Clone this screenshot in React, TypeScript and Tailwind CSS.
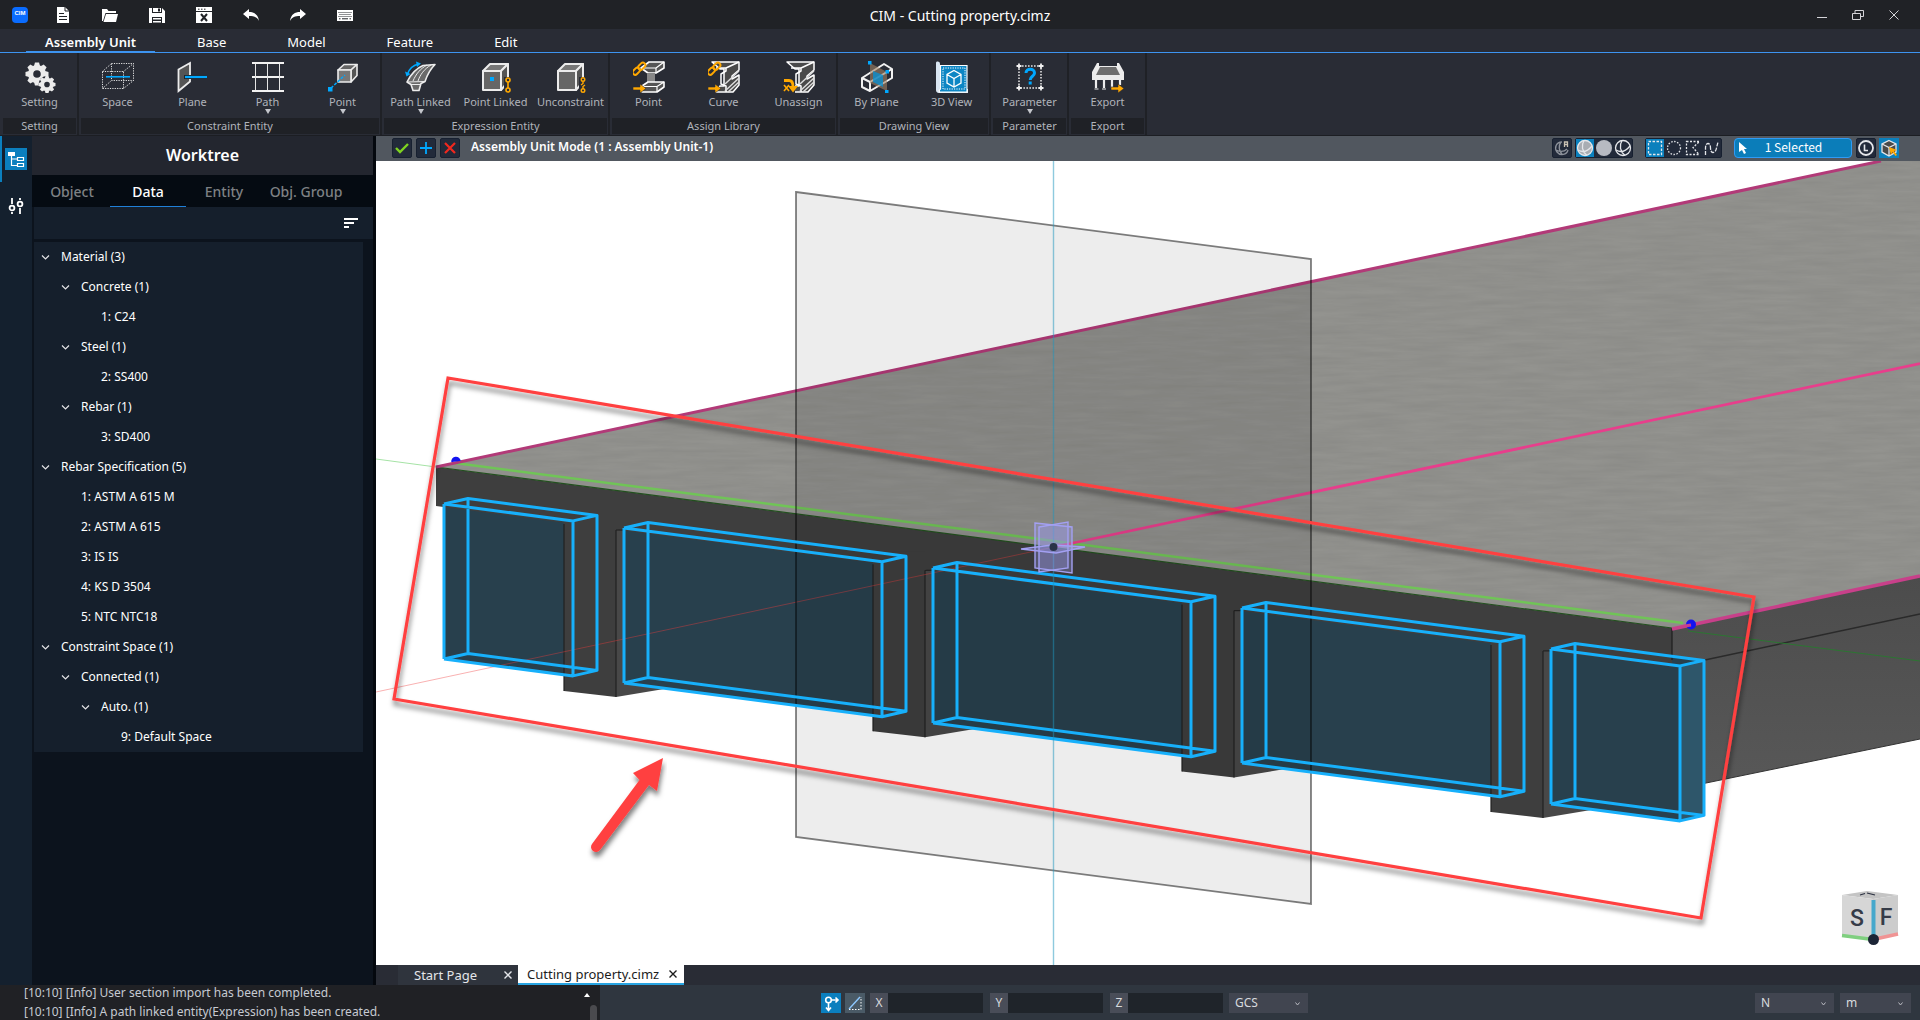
import type { ReactNode } from 'react';
import clsx from 'clsx';

const ORANGE = '#ffa800';
const SKY = '#00a8ff';

/* ---------- title bar icons ---------- */

function QuickIcon({ children }: { children: ReactNode }) {
  return (
    <svg viewBox="0 0 16 16" className="size-4" fill="#fff">
      {children}
    </svg>
  );
}

const quickActions: { name: string; icon: ReactNode }[] = [
  {
    name: 'New',
    icon: (
      <>
        <path d="M2 0h8l4 4v12H2z" />
        <path d="M10 0v4h4" fill="none" stroke="#202226" />
        <path d="M4 6.500h5M4 9.500h8M4 12.500h8" stroke="#202226" />
      </>
    ),
  },
  {
    name: 'Open',
    icon: (
      <>
        <path d="M0 2h5l1.500 2H14v2H3.500L1 14H0z" />
        <path d="M4 7h12l-2 8H1.500z" />
      </>
    ),
  },
  {
    name: 'Save',
    icon: (
      <>
        <path d="M0 1h3v5h10V1l3 3v12h-3v-6H3v6H0z" />
        <path d="M4 1h8v4H4z" />
        <path d="M9 1.500h2v3H9z" fill="#202226" />
        <path d="M4 11h8v1.500H4zM4 14h8v1.500H4z" />
      </>
    ),
  },
  {
    name: 'Close file',
    icon: (
      <>
        <path d="M0 0h16v16H0z" />
        <path d="M0 4.500h16M2 2.200h1.500M5 2.200h1.500M8 2.200h1.500" stroke="#202226" />
        <path d="M5 7l6 7M11 7l-6 7" stroke="#202226" strokeWidth="2" />
      </>
    ),
  },
  {
    name: 'Undo',
    icon: <path d="M0 7l6-5v3c5 0 9 2 10 9-2-4-5-5-10-5v3z" />,
  },
  {
    name: 'Redo',
    icon: <path d="M16 7l-6-5v3C5 5 1 7 0 14c2-4 5-5 10-5v3z" />,
  },
  {
    name: 'Shortcuts',
    icon: (
      <>
        <path d="M0 3h16v11H0z" />
        <path
          d="M1.500 5.500h13M2.500 7.500h12M1.500 9.500h13"
          stroke="#202226"
          strokeDasharray="1 1"
        />
        <path d="M2 11.800h1.500M5 11.800h6M12.500 11.800H14" stroke="#202226" />
      </>
    ),
  },
];

function TitleBar() {
  return (
    <header className="grid h-[29px] shrink-0 grid-cols-[1fr_auto_1fr] items-center bg-[#202226] px-3">
      <div className="flex items-center">
        <span className="flex size-4 justify-center rounded-sm bg-[#0a6cff] pt-[3px] font-['Liberation_Sans'] text-[6px] leading-[6px] font-bold text-white">
          CIM
        </span>
        <div className="ml-[27px] flex items-center gap-[31px]">
          {quickActions.map((action) => (
            <button key={action.name} aria-label={action.name}>
              <QuickIcon>{action.icon}</QuickIcon>
            </button>
          ))}
        </div>
      </div>
      <h1 className="pt-0.5 text-[14px] leading-5 text-white">
        CIM - Cutting property.cimz
      </h1>
      <div className="flex items-center justify-end gap-6 pr-2">
        <button aria-label="Minimize">
          <svg viewBox="0 0 12 12" className="size-3" stroke="#d4d4d8" fill="none">
            <path d="M1 8.500h10" />
          </svg>
        </button>
        <button aria-label="Restore">
          <svg viewBox="0 0 12 12" className="size-3" stroke="#d4d4d8" fill="none">
            <path d="M.5 4.500h8v6h-8zM3 4V1.500h8.500v6H9" />
          </svg>
        </button>
        <button aria-label="Close">
          <svg viewBox="0 0 12 12" className="size-3" stroke="#d4d4d8" fill="none">
            <path d="M1.500 1.500l9 9M10.500 1.500l-9 9" />
          </svg>
        </button>
      </div>
    </header>
  );
}

const menus = ['Assembly Unit', 'Base', 'Model', 'Feature', 'Edit'];

function MenuTabs() {
  return (
    <nav className="flex h-6 shrink-0 gap-[23px] border-b border-[#3d94f0] bg-[#292c35] pl-[26px]">
      {menus.map((menu, i) => (
        <button
          key={menu}
          className={clsx(
            'h-6 border-b-2 px-[19px] pt-1 text-[13px] leading-4 text-white',
            i === 0 ? 'border-[#3d94f0] font-semibold' : 'border-transparent',
          )}
        >
          {menu}
        </button>
      ))}
    </nav>
  );
}

/* ---------- ribbon icons ---------- */

function Gear({ x, y, r, teeth }: { x: number; y: number; r: number; teeth: number }) {
  const angles = Array.from({ length: teeth }, (_, i) => (360 / teeth) * i);
  return (
    <g transform={`translate(${x} ${y})`} fill="#ececec">
      <circle r={r * 0.56} fill="none" stroke="#ececec" strokeWidth={r * 0.46} />
      {angles.map((a) => (
        <path
          key={a}
          transform={`rotate(${a})`}
          d={`M${-r * 0.26} ${-r * 0.7}L${-r * 0.18} ${-r}H${r * 0.18}L${r * 0.26} ${-r * 0.7}z`}
        />
      ))}
    </g>
  );
}

function SolidCube() {
  return (
    <g stroke="#ececec" strokeWidth="2" strokeLinejoin="round">
      <path d="M3 10l7-7h18l-7 7z" fill="#777" />
      <path d="M21 10l7-7v18l-7 8z" fill="#555" />
      <path d="M3 10h18v19H3z" fill="#666" />
    </g>
  );
}

function Link() {
  return (
    <g fill="none" stroke={ORANGE} strokeWidth="2">
      <rect x="-5" y="-2.500" width="8" height="5" rx="2.500" transform="translate(4 9.500) rotate(-45)" />
      <rect x="-5" y="-2.500" width="8" height="5" rx="2.500" transform="translate(9.500 4.500) rotate(-45)" />
    </g>
  );
}

function OrangeArrow({ x, y }: { x: number; y: number }) {
  return (
    <path
      d={`M${x} ${y - 1.5}h7v-3l6 4.500-6 4.500v-3h-7z`}
      fill={ORANGE}
      stroke="#292c35"
      strokeWidth="0.6"
    />
  );
}

function CutBeam() {
  return (
    <g stroke="#fff" strokeWidth="1.500" strokeLinejoin="round">
      <path d="M4 1h27v8l-7 6v3l7-4v10l-6 7H8l4-6h4V8h-4z" fill="#4a4a4a" />
      <path d="M8 7h10l13-6M18 7v3l-5 3v10l5 2v6" fill="none" />
      <path d="M17 30l14-13M17 23L31 10M20 31l11-10" stroke="#ddd" />
    </g>
  );
}

const icons: Record<string, ReactNode> = {
  setting: (
    <>
      <Gear x={13} y={13} r={11.5} teeth={8} />
      <circle cx="23" cy="23.500" r="8.500" fill="#292c35" />
      <Gear x={23} y={23.5} r={8.5} teeth={8} />
    </>
  ),
  space: (
    <>
      <path
        d="M.5 10.500h21v17H.5zM9.500 2.500h22v17h-22zM.5 10.500l9-8M21.500 10.500l10-8M.5 27.500l9-8M21.500 27.500l10-8"
        fill="none"
        stroke="#e4e4e4"
        strokeDasharray="1.200 1.200"
      />
      <path d="M4 15.800h24" stroke={SKY} strokeWidth="1.600" />
    </>
  ),
  plane: (
    <>
      <path d="M1.500 8.500L13 2v18.500L1.500 30z" fill="#555" stroke="#ececec" strokeWidth="1.800" />
      <path d="M7 16h23" stroke="#20242b" strokeWidth="4" />
      <path d="M8 16h22" stroke={SKY} strokeWidth="2.200" />
    </>
  ),
  path: (
    <>
      <path d="M0 2h32M0 16h32M0 30h32" stroke="#f2f2f2" strokeWidth="2" />
      <path d="M3.500 3v26M15.500 3v26M27.500 3v26" stroke="#e4e4e4" />
    </>
  ),
  point: (
    <>
      <g stroke="#ececec" strokeWidth="1.600" strokeLinejoin="round">
        <path d="M11 9l6-5.500h13L24 9z" fill="#666" />
        <path d="M24 9l6-5.500v11L24 21z" fill="#555" />
        <path d="M11 9h13v12H11z" fill="#777" />
      </g>
      <path d="M4 27l14-13" stroke={SKY} strokeWidth="1.500" strokeDasharray="3 1.500" />
      <path d="M1 26h4.500v4.500H1z" fill={SKY} />
    </>
  ),
  pathLinked: (
    <>
      <path
        d="M2 21C6 13 12 7 18 4.500L30 3.500c-5 5-8 11-10 17l-4 2-2 7H8l-2-6z"
        fill="#6a6a6a"
        stroke="#ececec"
        strokeWidth="1.600"
        strokeLinejoin="round"
      />
      <path d="M2 21l18-.5M8 20c3-7 7-12 14-16M13 20c2-6 6-12 13-16M6 23.500h10" fill="none" stroke="#ececec" />
      <path d="M2 14C4 8 8 4 14 3" fill="none" stroke={SKY} strokeWidth="1.500" />
      <path d="M0 10.500l1.500 5 4-2.500zM11 .5l5 2L12 6z" fill={SKY} />
    </>
  ),
  pointLinked: (
    <>
      <SolidCube />
      <path d="M10 16h4v4h-4z" fill={SKY} />
      <path d="M24 16h8v16h-8z" fill="#292c35" />
      <g fill="none" stroke={ORANGE} strokeWidth="1.600">
        <circle cx="28" cy="19" r="2" />
        <circle cx="28" cy="29" r="2" />
        <path d="M28 21v6" />
      </g>
    </>
  ),
  unconstraint: (
    <>
      <SolidCube />
      <path d="M24 16h8v16h-8z" fill="#292c35" />
      <g fill="none" stroke={ORANGE} strokeWidth="1.400">
        <circle cx="28" cy="18.500" r="1.800" />
        <circle cx="28" cy="29.500" r="1.800" />
        <path d="M28 20.500v2l-2 1.500M28 27.500v-2l2-1.500" />
      </g>
    </>
  ),
  assignPoint: (
    <>
      <g stroke="#fff" strokeWidth="1.600" strokeLinejoin="round">
        <path d="M8 7l8-6h15v6l-8 5h-8z" fill="#555" />
        <path d="M14 12h8v10h-8z" fill="#888" stroke="none" />
        <path d="M9 25l6-4h16v5l-7 5H9z" fill="#555" />
        <path d="M9 25.500h15l7-4.500M24 25.500V31M10 7h13l8-6M23 7v5" fill="none" strokeWidth="1.200" />
      </g>
      <Link />
      <OrangeArrow x={0} y={27.5} />
    </>
  ),
  assignCurve: (
    <>
      <CutBeam />
      <Link />
      <OrangeArrow x={0} y={27.5} />
    </>
  ),
  unassign: (
    <>
      <CutBeam />
      <path d="M0 17h12v15H0z" fill="#292c35" />
      <path d="M1 24l5 6M6 24l-5 6" stroke={ORANGE} strokeWidth="1.600" />
      <path d="M1 19.500h5c3 0 4 2 4 6" fill="none" stroke={ORANGE} strokeWidth="2.800" />
      <path d="M5 25h10l-5 6.500z" fill={ORANGE} />
    </>
  ),
  byPlane: (
    <>
      <g fill="none" stroke="#f2f2f2" strokeWidth="2" strokeLinejoin="round">
        <path d="M1 17l22-14 8 5v9L9 30l-8-4z" />
        <path d="M1 17l8 4L31 8M9 21v9" />
      </g>
      <path d="M9 2l17 9v19L9 22z" fill="#a08468" fillOpacity=".6" />
      <path d="M12 10l10 4v12l-10-5z" fill="#0a8fcf" fillOpacity=".8" />
      <path d="M7 0h3.500v3.500H7zM24.500 9H28v3.500h-3.500zM24 29h3.500v3H24z" fill={SKY} />
    </>
  ),
  view3d: (
    <>
      <path d="M0 2c0-2 4-2 4 1v25h28v4H4c-4 0-4-2-4-4z" fill="#d9e6f2" />
      <path d="M4.500 4.500H31v26.500H3.500c-1-2 1-3 1-3z" fill="#0d86c4" stroke="#fff" strokeWidth="1.200" />
      <path d="M7 7h22v21H7z" fill="none" stroke="#fff" strokeDasharray="1.200 1.200" />
      <path d="M18 9.500l7 4v8.500l-7 4-7-4v-8.500zM11 13.500l7 4 7-4M18 17.500V26" fill="none" stroke="#fff" strokeWidth="1.300" />
    </>
  ),
  parameter: (
    <>
      <path d="M5 5h22v22H5z" fill="none" stroke="#e4e4e4" strokeWidth="1.600" strokeDasharray="1.600 1.400" />
      <path
        d="M2.500 5h5M5 2.500v5M24.500 5h5M27 2.500v5M2.500 27h5M5 24.500v5M24.500 27h5M27 24.500v5"
        stroke="#f2f2f2"
        strokeWidth="1.800"
      />
      <path d="M12 12c0-5 8.500-5 8.500 0 0 3.500-4.300 3-4.300 7" fill="none" stroke={SKY} strokeWidth="3" />
      <path d="M14.700 20.500h3v3h-3z" fill={SKY} />
    </>
  ),
  export: (
    <>
      <path d="M0 11L5 2h2v3h18V2h2l5 9v8H0z" fill="#ececec" />
      <path d="M8 6h16l4 8H4z" fill="#6e6e6e" />
      <path d="M4 18v9M12 18v9M20 18v9M28 18v6" stroke="#ececec" strokeWidth="2.200" />
      <path d="M2.500 28h4M10 28h4" stroke="#ececec" />
      <OrangeArrow x={19} y={27.5} />
    </>
  ),
};

type Tool = { icon: string; label: string; menu?: boolean };

const ribbon: { title: string; tools: Tool[] }[] = [
  { title: 'Setting', tools: [{ icon: 'setting', label: 'Setting' }] },
  {
    title: 'Constraint Entity',
    tools: [
      { icon: 'space', label: 'Space' },
      { icon: 'plane', label: 'Plane' },
      { icon: 'path', label: 'Path', menu: true },
      { icon: 'point', label: 'Point', menu: true },
    ],
  },
  {
    title: 'Expression Entity',
    tools: [
      { icon: 'pathLinked', label: 'Path Linked', menu: true },
      { icon: 'pointLinked', label: 'Point Linked' },
      { icon: 'unconstraint', label: 'Unconstraint' },
    ],
  },
  {
    title: 'Assign Library',
    tools: [
      { icon: 'assignPoint', label: 'Point' },
      { icon: 'assignCurve', label: 'Curve' },
      { icon: 'unassign', label: 'Unassign' },
    ],
  },
  {
    title: 'Drawing View',
    tools: [
      { icon: 'byPlane', label: 'By Plane' },
      { icon: 'view3d', label: '3D View' },
    ],
  },
  { title: 'Parameter', tools: [{ icon: 'parameter', label: 'Parameter', menu: true }] },
  { title: 'Export', tools: [{ icon: 'export', label: 'Export' }] },
];

function Ribbon() {
  return (
    <div className="flex h-[83px] shrink-0 border-b border-[#1c1e23] bg-[#292c35] pl-px">
      {ribbon.map((group) => (
        <section key={group.title} className="flex flex-col border-r-2 border-[#1f2126] pl-px">
          <div className="flex flex-1">
            {group.tools.map((tool) => (
              <button key={tool.label} className="flex w-[75px] flex-col items-center pt-2">
                <svg viewBox="0 0 32 32" className="size-8">
                  {icons[tool.icon]}
                </svg>
                <span className="mt-px text-[11px] leading-[15px] whitespace-nowrap text-[#b0b3ba]">
                  {tool.label}
                </span>
                {tool.menu && (
                  <svg viewBox="0 0 6 5" className="h-[5px] w-1.5" fill="#c4c6cc">
                    <path d="M0 0h6L3 5z" />
                  </svg>
                )}
              </button>
            ))}
          </div>
          <h2 className="mx-px mb-px bg-[#1f2126] text-center text-[11px] leading-4 text-[#b0b3ba]">
            {group.title}
          </h2>
        </section>
      ))}
    </div>
  );
}

/* ---------- worktree ---------- */

type Node = { label: string; children?: Node[] };

const tree: Node[] = [
  {
    label: 'Material (3)',
    children: [
      { label: 'Concrete (1)', children: [{ label: '1: C24' }] },
      { label: 'Steel (1)', children: [{ label: '2: SS400' }] },
      { label: 'Rebar (1)', children: [{ label: '3: SD400' }] },
    ],
  },
  {
    label: 'Rebar Specification (5)',
    children: [
      { label: '1: ASTM A 615 M' },
      { label: '2: ASTM A 615' },
      { label: '3: IS IS' },
      { label: '4: KS D 3504' },
      { label: '5: NTC NTC18' },
    ],
  },
  {
    label: 'Constraint Space (1)',
    children: [
      {
        label: 'Connected (1)',
        children: [{ label: 'Auto. (1)', children: [{ label: '9: Default Space' }] }],
      },
    ],
  },
];

function TreeNode({ node }: { node: Node }) {
  return (
    <li>
      <button className="flex h-[30px] items-center gap-[11px] pl-[7px] text-[12px] text-white">
        <svg viewBox="0 0 9 9" className="size-[9px]" fill="none" stroke="#e4e4e7" strokeWidth="1.200">
          {node.children && <path d="M1 2.500l3.500 3.500L8 2.500" />}
        </svg>
        {node.label}
      </button>
      {node.children && (
        <ul className="pl-5">
          {node.children.map((child) => (
            <TreeNode key={child.label} node={child} />
          ))}
        </ul>
      )}
    </li>
  );
}

const treeTabs = ['Object', 'Data', 'Entity', 'Obj. Group'];

function Sidebar() {
  return (
    <div className="flex w-94 shrink-0 border-r-3 border-[#04080e] bg-[#0c131d]">
      <div className="w-8 shrink-0 bg-[#14202e]">
        <div className="border-l-2 border-[#0b7fbe] py-3 pl-[3px]">
          <button aria-label="Worktree" className="block size-[22px] bg-[#0b7fbe]">
            <svg viewBox="0 0 22 22" className="size-[22px]">
              <path d="M3 4h7v4H3z" fill="#fff" />
              <path d="M6.500 8v9.500H12M6.500 11h5.500M12.500 9.500h6v3h-6zM12.500 15.500h6v3h-6z" fill="none" stroke="#fff" strokeWidth="1.200" />
            </svg>
          </button>
        </div>
        <button aria-label="Options" className="mt-[15px] ml-2 block">
          <svg viewBox="0 0 16 18" className="h-[18px] w-4" fill="none" stroke="#fff" strokeWidth="1.800">
            <circle cx="4" cy="11" r="2.400" />
            <circle cx="12" cy="7" r="2.400" />
            <path d="M4 1v6M4 15v2M12 1v2M12 11v6" />
          </svg>
        </button>
      </div>
      <aside className="flex min-w-0 flex-1 flex-col">
        <h2 className="bg-[#23262f] text-center text-[16px] leading-[39px] font-semibold text-white">
          Worktree
        </h2>
        <div className="flex h-8 bg-[#050b12] pl-0.5">
          {treeTabs.map((tab) => (
            <button
              key={tab}
              className={clsx(
                'border-b pt-0.5 text-[14px] font-medium',
                tab === 'Obj. Group' ? 'w-22' : 'w-19',
                tab === 'Data' ? 'border-[#2080d8] text-white' : 'border-transparent text-[#7e8184]',
              )}
            >
              {tab}
            </button>
          ))}
        </div>
        <div className="ml-0.5 flex h-8 items-center justify-end bg-[#151f2c] pr-[15px]">
          <button aria-label="Sort">
            <svg viewBox="0 0 14 10" className="h-2.5 w-3.5" stroke="#fff" strokeWidth="2">
              <path d="M0 1h14M0 5h10M0 9h5" />
            </svg>
          </button>
        </div>
        <ul className="mt-[3px] mr-2.5 ml-0.5 bg-[#151f2c]">
          {tree.map((node) => (
            <TreeNode key={node.label} node={node} />
          ))}
        </ul>
      </aside>
    </div>
  );
}

/* ---------- mode bar ---------- */

function ViewIcon({ children }: { children: ReactNode }) {
  return (
    <svg viewBox="0 0 18 18" className="size-[18px]" fill="none" stroke="#e4e6ea" strokeWidth="1.300">
      {children}
    </svg>
  );
}

const modeButton = 'flex size-5 items-center justify-center rounded-xs border border-[#172030] bg-[#222a3a]';
const modeGroup = 'flex gap-px rounded-xs border border-[#172030] bg-[#222a3a]';

const shadeModes = [
  {
    name: 'Shaded with edges',
    icon: (
      <>
        <circle cx="9" cy="9" r="7.500" fill="#a9adb3" />
        <path d="M2 11c5 3 10 1 14-4M8 1.500c-3 5-2 11 3 15" />
      </>
    ),
  },
  { name: 'Shaded', icon: <circle cx="9" cy="9" r="8" fill="#b7bac2" stroke="none" /> },
  {
    name: 'Wireframe',
    icon: (
      <>
        <circle cx="9" cy="9" r="7.500" />
        <path d="M2 11c5 3 10 1 14-4M8 1.500c-3 5-2 11 3 15" />
      </>
    ),
  },
];

const selectModes = [
  { name: 'Select by window', icon: <path d="M2.500 2.500h13v13h-13z" strokeDasharray="2.500 1.500" /> },
  { name: 'Select by circle', icon: <circle cx="9" cy="9" r="6.500" strokeDasharray="1.500 1.500" /> },
  {
    name: 'Select by polygon',
    icon: <path d="M2.500 2.500h13L9 8.500l6 7h-12.500z" strokeDasharray="2 1.500" />,
  },
  { name: 'Select by line', icon: <path d="M2.500 16V9c0-6 5-6 5 0s5 6 6 0l1.500-6" strokeDasharray="4 1.200" /> },
];

function ModeBar() {
  return (
    <div className="flex h-[25px] shrink-0 items-start bg-[#51575f] pt-0.5 pr-[21px] pl-4">
      <div className="flex gap-1">
        <button aria-label="Apply" className={modeButton}>
          <svg viewBox="0 0 16 16" className="size-4" fill="none" stroke="#7ed321" strokeWidth="2.400">
            <path d="M2 8l4 4 8-8" />
          </svg>
        </button>
        <button aria-label="Add" className={modeButton}>
          <svg viewBox="0 0 16 16" className="size-4" stroke="#00a8ff" strokeWidth="1.800">
            <path d="M8 2v12M2 8h12" />
          </svg>
        </button>
        <button aria-label="Cancel" className={modeButton}>
          <svg viewBox="0 0 16 16" className="size-4" stroke="#f0281e" strokeWidth="2.200">
            <path d="M3 3l10 10M13 3L3 13" />
          </svg>
        </button>
      </div>
      <h2 className="ml-[11px] text-[12px] leading-[18px] font-semibold text-white">
        Assembly Unit Mode (1 : Assembly Unit-1)
      </h2>
      <div className="ml-auto flex items-center">
        <button aria-label="Auto shading" className={modeButton}>
          <ViewIcon>
            <path d="M9 3C3 3 1 9 4 13s10 3 11-2M3 11c4 2 8 2 11-1M8 3c-3 4-2 9 1 12" stroke="#8d929b" />
            <path d="M11.500 8V3h3v5M11.500 5.500h3" stroke="#c9c2b4" />
          </ViewIcon>
        </button>
        <div className={clsx(modeGroup, 'ml-[3px]')}>
          {shadeModes.map((mode, i) => (
            <button key={mode.name} aria-label={mode.name} className={clsx(i === 0 && 'bg-[#0b80bd]')}>
              <ViewIcon>{mode.icon}</ViewIcon>
            </button>
          ))}
        </div>
        <div className={clsx(modeGroup, 'ml-3')}>
          {selectModes.map((mode, i) => (
            <button key={mode.name} aria-label={mode.name} className={clsx(i === 0 && 'bg-[#0b80bd]')}>
              <ViewIcon>{mode.icon}</ViewIcon>
            </button>
          ))}
        </div>
        <button className="ml-3 flex h-5 w-[118px] items-center rounded-sm border border-[#2f9bf5] bg-[#0b7db9] pl-1 text-white">
          <svg viewBox="0 0 9 12" className="h-3 w-[9px]" fill="#fff">
            <path d="M0 0l8 7H5l2 4-2 1-2-4-3 2z" />
          </svg>
          <span className="flex-1 pr-3 pb-0.5 font-['Noto_Sans_CJK_KR','Noto_Sans',sans-serif] text-[12px] leading-4">
            1 Selected
          </span>
        </button>
        <button aria-label="Local axis" className={clsx(modeButton, 'ml-1')}>
          <ViewIcon>
            <circle cx="9" cy="9" r="7" strokeWidth="1.800" />
            <path d="M7.500 5.500v6H11" strokeWidth="1.600" />
          </ViewIcon>
        </button>
        <button aria-label="Pick solid" className="ml-[3px] flex size-5 items-center justify-center bg-[#0b80bd]">
          <ViewIcon>
            <path d="M9 1.500L16 5v8l-7 4-7-4V5z" fill="#4a4a4a" />
            <path d="M2 5l7 3.500L16 5M9 8.500V17" />
            <path d="M9 8l8 3-3 1 3 4-1.500 1-3-4-1.500 3z" fill={ORANGE} stroke="none" />
          </ViewIcon>
        </button>
      </div>
    </div>
  );
}

/* ---------- 3D scene ---------- */

type Box = { x: number; y: number; w: number };

// front top-left corner of every void box and the width of its front face
const boxes: Box[] = [
  { x: 444, y: 504, w: 129 },
  { x: 624, y: 528, w: 258 },
  { x: 933, y: 568, w: 258 },
  { x: 1242, y: 608, w: 258 },
  { x: 1551, y: 649, w: 129 },
];

const SLOPE = 0.131;
const BOX_H = 155;

function corners({ x, y, w }: Box) {
  const drop = w * SLOPE;
  return {
    fl: [x, y],
    fr: [x + w, y + drop],
    bl: [x + 24, y - 5.5],
    br: [x + 24 + w, y + drop - 5.5],
  };
}

const down = ([x, y]: number[]) => [x, y + BOX_H];
const line = (...pts: number[][]) => 'M' + pts.map((p) => p.join(' ')).join('L');

function BoxFill({ box }: { box: Box }) {
  const { fl, fr, bl, br } = corners(box);
  return <path d={line(fl, bl, br, down(br), down(fr), down(fl)) + 'z'} fill="#28404d" />;
}

function BoxEdges({ box }: { box: Box }) {
  const { fl, fr, bl, br } = corners(box);
  return (
    <path
      d={[
        line(fl, fr, br, bl, fl),
        line(down(fl), down(fr), down(br), down(bl), down(fl)),
        line(fl, down(fl)),
        line(fr, down(fr)),
        line(bl, down(bl)),
        line(br, down(br)),
      ].join('')}
      fill="none"
      stroke="#17b0fb"
      strokeWidth="3"
      strokeLinejoin="round"
    />
  );
}

const girders = [0, 1, 2, 3].map((i) => ({ x: 564 + 309 * i, y: 691 + 40.3 * i }));

function Scene() {
  return (
    <svg
      viewBox="376 161 1544 804"
      preserveAspectRatio="xMidYMid slice"
      className="min-h-0 w-full flex-1 bg-white"
    >
      <defs>
        <linearGradient id="side" x1="0" y1="0" x2="0" y2="1">
          <stop offset="0" stopColor="#4c4c4c" />
          <stop offset="1" stopColor="#585858" />
        </linearGradient>
        <filter id="concrete" x="0" y="0" width="100%" height="100%">
          <feTurbulence type="fractalNoise" baseFrequency="0.02 0.2" numOctaves="3" result="n" />
          <feColorMatrix in="n" values="0 0 0 0 0  0 0 0 0 0  0 0 0 0 0  .16 0 0 0 -.04" result="g" />
          <feComposite in="g" in2="SourceGraphic" operator="in" result="t" />
          <feMerge>
            <feMergeNode in="SourceGraphic" />
            <feMergeNode in="t" />
          </feMerge>
        </filter>
        <filter id="shadow" x="-5%" y="-5%" width="110%" height="115%">
          <feDropShadow dx="1" dy="5" stdDeviation="2.500" floodOpacity=".5" />
        </filter>
      </defs>

      {/* deck top and right side */}
      <path d="M436 467L1881 161H1920V576L1672 628z" fill="#93938f" filter="url(#concrete)" />
      <path d="M1672 628L1920 576V739L1672 790z" fill="url(#side)" />
      <path d="M1672 667L1920 614" stroke="#2a2a2a" strokeWidth="1.500" />
      <path d="M1672 790L1920 739" stroke="#333" />

      {/* right faces of the girders */}
      {girders.map(({ x, y }) => (
        <path key={x} d={`M${x + 52} ${y - 162}l60 -10v168L${x + 52} ${y + 6}z`} fill="#484848" />
      ))}

      {boxes.map((box) => (
        <BoxFill key={box.x} box={box} />
      ))}
      <path d="M1680 666L1704 660V815L1680 821z" fill="#2e566a" />

      {/* slab and girder front */}
      <path d="M436 467L1672 628V667L436 506z" fill="#3e3e3e" />
      {girders.map(({ x, y }) => (
        <g key={x}>
          <path d={`M${x} ${y - 180}h52V${y + 6}L${x} ${y}z`} fill="#3e3e3e" />
          <path d={`M${x + 52} ${y - 161}V${y + 6}M${x} ${y}V${y - 167}`} stroke="#222" strokeWidth="1.200" fill="none" />
          <path d={`M${x + 52} ${y - 161}h7`} stroke="#222" strokeWidth="1.200" />
        </g>
      ))}
      <path d="M1672 628V660" stroke="#1e1e1e" strokeWidth="1.200" />

      {/* world axes */}
      <path d="M376 459L436 467" stroke="#a6e3a6" />
      <path d="M1688 631L1920 661" stroke="#2c7632" />
      <path d="M376 692L1054 547" stroke="#f03c3c" strokeOpacity=".4" />

      <path d="M436 467L1672 628" stroke="#23501f" strokeWidth="1.200" />
      <path d="M455 463L1683 623" stroke="#70c457" strokeWidth="2.500" />
      <path d="M436 467L1881 161" stroke="#b23a78" strokeWidth="3" />
      <path d="M1672 629L1920 576" stroke="#c8408a" strokeWidth="3.500" />
      <path d="M1054 547L1920 363.500" stroke="#e83e8c" strokeWidth="2.800" />

      {/* section plane */}
      <path d="M796 192L1311 259V904L796 837z" fill="#000" fillOpacity=".07" stroke="#000" strokeOpacity=".5" strokeWidth="1.800" />

      {boxes.map((box) => (
        <BoxEdges key={box.x} box={box} />
      ))}
      <path d="M1053.500 161V965" stroke="#1e96be" strokeOpacity=".5" strokeWidth="1.400" />

      {/* origin */}
      <g fill="#9a9af0" fillOpacity=".3" stroke="#a3a0f2" strokeWidth="1.400">
        <path d="M1035 523L1072 527V573L1035 568z" />
        <path d="M1039 527L1068 522V568L1039 572z" />
        <path d="M1021 549L1052 545L1085 547L1056 553z" />
      </g>
      <circle cx="1053.500" cy="547" r="4" fill="#2a3448" />
      <path d="M452 462a4 4 0 0 1 8-1" fill="#1414f0" stroke="#1414f0" strokeWidth="1.500" />
      <circle cx="1691" cy="624.500" r="4" fill="#1414f0" stroke="#1414f0" strokeWidth="2" />
      <path d="M1685 626l6-1" stroke="#c8408a" strokeWidth="3" />

      {/* annotation */}
      <g filter="url(#shadow)">
        <path d="M448 378L1754 597L1701 918L394 699z" fill="none" stroke="#ff4141" strokeWidth="3.200" />
      </g>
      <path
        d="M663 758L633 773L639.500 780L592 844A5 5 0 0 0 600 850L649 785L657 791z"
        fill="#ff4141"
        filter="url(#shadow)"
      />

      {/* view cube */}
      <g>
        <path d="M1842 895L1867 891L1898 895L1873 899z" fill="#c4c4c4" />
        <path d="M1842 895L1873 899V940L1842 936z" fill="#d6d6d6" />
        <path d="M1873 899L1898 895V934L1873 940z" fill="#cccccc" />
        <path d="M1860 895l5-1.500M1867 893l8 2" stroke="#2a3040" strokeWidth="1.200" />
        <path d="M1842 935.500L1873 939.500" stroke="#7fcf7f" strokeWidth="3.500" />
        <path d="M1873 939.500L1898 934" stroke="#f09494" strokeWidth="3.500" />
        <path d="M1873.500 900V938" stroke="#46a8cc" strokeWidth="4" />
        <circle cx="1873.500" cy="939.500" r="5.500" fill="#1c2436" />
        <g className="font-['Roboto'] text-[23px] font-medium" fill="#363c48" textAnchor="middle">
          <text x="1857" y="926">S</text>
          <text x="1886" y="925">F</text>
        </g>
      </g>
    </svg>
  );
}

function CloseIcon() {
  return (
    <svg viewBox="0 0 8 8" className="size-2" stroke="currentColor" strokeWidth="1.400">
      <path d="M.5 .5l7 7M7.500 .5l-7 7" />
    </svg>
  );
}

function DocumentTabs() {
  return (
    <div className="flex h-5 shrink-0 bg-[#292c35] pl-[22px] text-[13px] leading-[18px]">
      <div className="flex w-30 items-center justify-between bg-[#2f343d] pr-1.5 pl-4 text-[#e4e6ea]">
        <button>Start Page</button>
        <button aria-label="Close Start Page">
          <CloseIcon />
        </button>
      </div>
      <div className="flex items-center gap-2.5 border-b-2 border-[#28a4e2] bg-white pr-[7px] pl-[9px] text-[#1c1c1c]">
        <button>Cutting property.cimz</button>
        <button aria-label="Close Cutting property.cimz">
          <CloseIcon />
        </button>
      </div>
    </div>
  );
}

/* ---------- bottom bar ---------- */

function Coordinate({ axis }: { axis: string }) {
  return (
    <label className="flex h-5 items-center bg-[#494d58] text-[12px] text-[#d8dade]">
      <span className="w-[18px] text-center">{axis}</span>
      <input type="text" className="h-5 w-[95px] bg-[#1f242a] px-1 outline-none" />
    </label>
  );
}

function Unit({ name, value, className }: { name: string; value: string; className: string }) {
  return (
    <div className={clsx('relative h-5', className)}>
      <select
        aria-label={name}
        defaultValue={value}
        className="block h-5 w-full appearance-none bg-[#414550] pl-1.5 text-[12px] leading-5 text-[#d8dade]"
      >
        <option>{value}</option>
      </select>
      <svg viewBox="0 0 5 4" className="absolute top-[9px] right-2 h-1 w-[5px]" fill="none" stroke="#b8bac0">
        <path d="M.5 .5l2 2.500 2-2.500" />
      </svg>
    </div>
  );
}

const log = [
  '[10:10] [Info] User section import has been completed.',
  '[10:10] [Info] A path linked entity(Expression) has been created.',
];

function StatusBar() {
  return (
    <footer className="flex h-[35px] shrink-0 bg-[#2f363f]">
      <div className="flex w-150 shrink-0 justify-between bg-[#202125]">
        <ul className="flex flex-col gap-[3px] pl-6 text-[12px] leading-4 whitespace-nowrap text-[#c6cad2]">
          {log.map((entry) => (
            <li key={entry}>{entry}</li>
          ))}
        </ul>
        <div className="flex w-4 flex-col justify-between pt-2">
          <svg viewBox="0 0 6 4" className="h-1 w-1.5" fill="#fff">
            <path d="M0 4h6L3 0z" />
          </svg>
          <div className="ml-1.5 h-[15px] w-[7px] rounded-t-sm bg-[#4a4a4e]" />
        </div>
      </div>
      <div className="flex flex-1 items-start pt-2 pr-[9px] pl-[221px]">
        <button aria-label="Snap" className="size-5 bg-[#0b7fbe]">
          <svg viewBox="0 0 20 20" className="size-5" fill="none" stroke="#fff" strokeWidth="1.600">
            <circle cx="7.500" cy="7" r="2.800" />
            <path d="M7.500 10v7M5 14.500l2.500 3 2.500-3M10.500 7H17M14.500 4.500L17 7l-2.500 2.500" />
          </svg>
        </button>
        <button aria-label="Relative" className="ml-1 size-5 bg-[#4a5a66]">
          <svg viewBox="0 0 20 20" className="size-5" fill="none">
            <path d="M4 16L15 4" stroke="#8ec8ff" strokeWidth="1.400" />
            <path d="M4 16.500h12V4" stroke="#fff" strokeDasharray="1.500 1.500" />
          </svg>
        </button>
        <div className="ml-[5px] flex gap-[7px]">
          <Coordinate axis="X" />
          <Coordinate axis="Y" />
          <Coordinate axis="Z" />
        </div>
        <Unit name="Coordinate system" value="GCS" className="ml-1.5 w-[79px]" />
        <div className="ml-auto flex gap-1.5">
          <Unit name="Force" value="N" className="w-[79px]" />
          <Unit name="Length" value="m" className="w-[71px]" />
        </div>
      </div>
    </footer>
  );
}

export default function App() {
  return (
    <div className="flex h-screen flex-col overflow-hidden bg-[#292c35] font-['Noto_Sans',sans-serif]">
      <TitleBar />
      <MenuTabs />
      <Ribbon />
      <div className="flex min-h-0 flex-1">
        <Sidebar />
        <main className="flex min-w-0 flex-1 flex-col">
          <ModeBar />
          <Scene />
          <DocumentTabs />
        </main>
      </div>
      <StatusBar />
    </div>
  );
}
